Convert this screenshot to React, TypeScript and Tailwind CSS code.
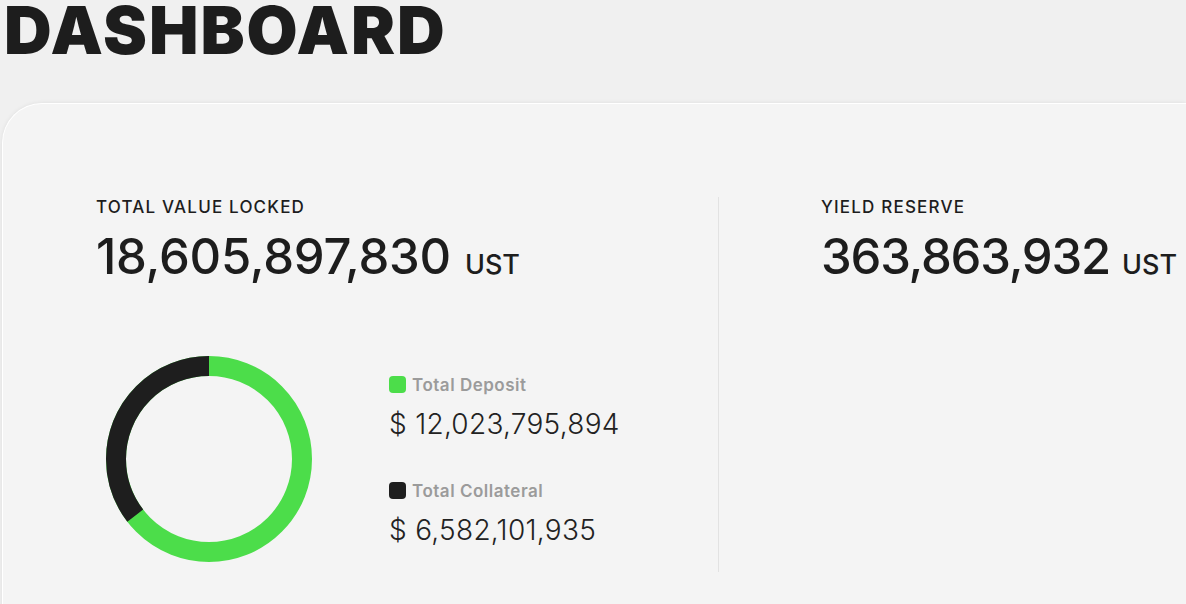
import React from "react";

const font = { fontFamily: "Inter, 'Noto Sans', sans-serif" };

function Donut({ deposit, collateral }: { deposit: number; collateral: number }) {
    const r = 93;
    const c = 2 * Math.PI * r;
    const share = collateral / (deposit + collateral);
    return (
        <svg width="206" height="206" viewBox="0 0 206 206" className="shrink-0">
            <circle cx="103" cy="103" r={r} fill="none" stroke="#4cdd4a" strokeWidth="20" />
            {/* collateral arc runs counter-clockwise from 12 o'clock */}
            <circle
                cx="103"
                cy="103"
                r={r}
                fill="none"
                stroke="#1e1e1e"
                strokeWidth="20"
                strokeDasharray={`${c * share} ${c}`}
                transform="rotate(-90 103 103) scale(1 -1) translate(0 -206)"
            />
        </svg>
    );
}

function Legend({ color, label, value }: { color: string; label: string; value: string }) {
    return (
        <div className="flex flex-col">
            <div className="flex items-center gap-[6px]">
                <span className={`h-[17px] w-[17px] rounded-[4px] ${color}`} />
                <span className="text-[17px] font-semibold leading-5 tracking-[0.03em] text-[#9b9b9b]">{label}</span>
            </div>
            <div className="mt-[12px] text-[28px] font-light leading-[34px] tracking-[0.01em] text-[#222]">{value}</div>
        </div>
    );
}

export default function App() {
    return (
        <div className="h-[604px] w-[1186px] overflow-hidden bg-[#f0f0f0]" style={font}>
            <h1 className="whitespace-nowrap pl-[4px] text-[66px] font-black leading-[60px] tracking-[0.03em] text-[#1d1d1d]">
                DASHBOARD
            </h1>
            <div className="ml-[2px] mt-[43px] h-[600px] rounded-tl-[40px] border-l border-t border-white bg-[#f4f4f4] shadow-[0_0_4px_rgba(0,0,0,0.08)]">
                <div className="flex pt-[93px]">
                    <div className="w-[716px] border-r border-[#e2e2e2] pb-[10px] pl-[93px]">
                        <div className="text-[17px] font-medium uppercase leading-5 tracking-[0.07em] text-[#1d1d1d]">
                            Total Value Locked
                        </div>
                        <div className="mt-[12px] flex items-baseline gap-[14px] text-[#1d1d1d]">
                            <span className="text-[49px] font-medium leading-[56px] tracking-[-0.005em]">18,605,897,830</span>
                            <span className="text-[27px] font-medium">UST</span>
                        </div>
                        <div className="mt-[70px] flex items-start">
                            <div className="ml-[10px]">
                                <Donut deposit={12023795894} collateral={6582101935} />
                            </div>
                            <div className="ml-[77px] flex flex-col gap-[40px] pt-[19px]">
                                <Legend color="bg-[#4cdd4a]" label="Total Deposit" value="$ 12,023,795,894" />
                                <Legend color="bg-[#1e1e1e]" label="Total Collateral" value="$ 6,582,101,935" />
                            </div>
                        </div>
                    </div>
                    <div className="pl-[102px]">
                        <div className="text-[17px] font-medium uppercase leading-5 tracking-[0.07em] text-[#1d1d1d]">
                            Yield Reserve
                        </div>
                        <div className="mt-[12px] flex items-baseline gap-[12px] whitespace-nowrap text-[#1d1d1d]">
                            <span className="text-[49px] font-medium leading-[56px] tracking-[-0.025em]">363,863,932</span>
                            <span className="text-[27px] font-medium">UST</span>
                        </div>
                    </div>
                </div>
            </div>
        </div>
    );
}
